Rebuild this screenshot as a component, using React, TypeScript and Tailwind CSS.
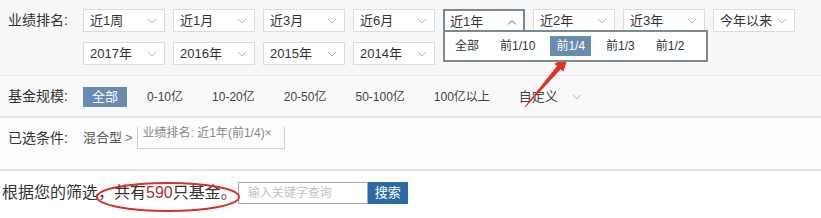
import React from 'react';

const FONT = "font-['Liberation_Sans','Noto_Sans_CJK_SC',sans-serif]";

const Chevron = ({ up = false }: { up?: boolean }) => (
    <svg width="10" height="6" viewBox="0 0 10 6" fill="none" stroke={up ? '#666' : '#b5b5b5'} strokeWidth="1">
        {up ? <path d="M1 5.5 L5 1.5 L9 5.5" /> : <path d="M1 1 L5 5 L9 1" />}
    </svg>
);

const Select = ({ label }: { label: string }) => (
    <div className="w-[82px] h-[23px] bg-white border border-[#dcdcdc] flex items-center justify-between pl-[6px] pr-[7px] text-[13px] text-[#333]">
        <span>{label}</span>
        <Chevron />
    </div>
);

const OpenSelect = () => (
    <div className="relative w-[82px] h-[23px] bg-white border-2 border-b-0 border-[#7b8a95] flex items-center justify-between pl-[5px] pr-[6px] text-[13px] text-[#333] z-10">
        <span>近1年</span>
        <Chevron up />
        <div className="absolute left-0 right-0 -bottom-[2px] h-[2px] bg-white z-20" />
        <div className="absolute -left-[2px] top-[19px] w-[265px] h-[32px] bg-white border-2 border-[#7b8a95] flex items-center gap-[9px] pl-[4px] text-[12px] text-[#333]">
            {['全部', '前1/10', '前1/4', '前1/3', '前1/2'].map(o => (
                <span key={o} className={`px-[6px] h-[20px] leading-[20px] ${o === '前1/4' ? 'bg-[#6a8bb0] text-white' : ''}`}>{o}</span>
            ))}
        </div>
    </div>
);

export default function App() {
    const row1 = ['近1周', '近1月', '近3月', '近6月'];
    const row1b = ['近2年', '近3年', '今年以来'];
    const row2 = ['2017年', '2016年', '2015年', '2014年'];
    const sizes = ['0-10亿', '10-20亿', '20-50亿', '50-100亿', '100亿以上'];

    return (
        <div className={`relative w-[821px] h-[218px] bg-white overflow-hidden ${FONT}`}>
            <div className="bg-[#f7f7f7] flex pt-[9px] pb-[10px] border-b border-[#e4e4e4]">
                <div className="w-[83px] pl-[8px] text-[14px] text-[#333] leading-[17px] pt-[3px]">业绩排名:</div>
                <div className="flex flex-col gap-[10px]">
                    <div className="flex gap-[8px]">
                        {row1.map(l => <Select key={l} label={l} />)}
                        <OpenSelect />
                        {row1b.map(l => <Select key={l} label={l} />)}
                    </div>
                    <div className="flex gap-[8px]">
                        {row2.map(l => <Select key={l} label={l} />)}
                    </div>
                </div>
            </div>

            <div className="bg-[#f9f9f9] h-[41px] flex items-center border-b-2 border-[#e6e6e6] mt-[1px]">
                <div className="w-[83px] pl-[8px] text-[14px] text-[#333]">基金规模:</div>
                <div className="flex items-center gap-[20px] text-[12px] text-[#444]">
                    <span className="bg-[#6a8bb0] text-white text-[13px] h-[20px] leading-[20px] px-[9px]">全部</span>
                    <div className="flex items-center gap-[29px]">
                        {sizes.map(s => <span key={s}>{s}</span>)}
                        <span className="flex items-center gap-[14px] text-[13px]">自定义 <Chevron /></span>
                    </div>
                </div>
            </div>

            <div className="bg-[#fdfdfd] h-[53px] flex items-start pt-[9px] border-b-2 border-[#e2e2e2]">
                <div className="w-[83px] pl-[8px] text-[14px] text-[#333] pt-[1px]">已选条件:</div>
                <div className="flex items-start text-[13px] text-[#555]">
                    <span className="pt-[1px]">混合型</span>
                    <span className="ml-[3px] mr-[4px] pt-[1px] text-[#777]">&gt;</span>
                    <span className="w-[148px] h-[22px] border border-[#cfcfcf] border-t-0 text-[12px] text-[#888] leading-[12px] pl-[5px]">业绩排名: 近1年(前1/4)×</span>
                </div>
            </div>

            <div className="flex items-center pt-[11px] pl-[2px]">
                <span className="text-[16px] text-[#333] leading-[22px]">根据您的筛选，共有<span className="text-[#a8342c]">590</span>只基金。</span>
                <div className="ml-[1px] w-[130px] h-[22px] border border-[#a9a9a9] bg-white text-[12px] text-[#c4c4c4] pl-[9px] leading-[20px]">输入关键字查询</div>
                <button className="w-[40px] h-[22px] bg-[#2c6aa6] text-white text-[13px]">搜索</button>
            </div>

            <svg className="absolute inset-0 pointer-events-none" width="821" height="218" viewBox="0 0 821 218">
                <polygon fill="#e0302a" points="568,57 563.5,71.5 560.8,69.2 525.4,107.3 524.6,106.7 557,66 554.3,63.7" />
                <ellipse cx="168" cy="197" rx="71" ry="14" fill="none" stroke="#d4302c" strokeWidth="2" />
            </svg>
        </div>
    );
}
